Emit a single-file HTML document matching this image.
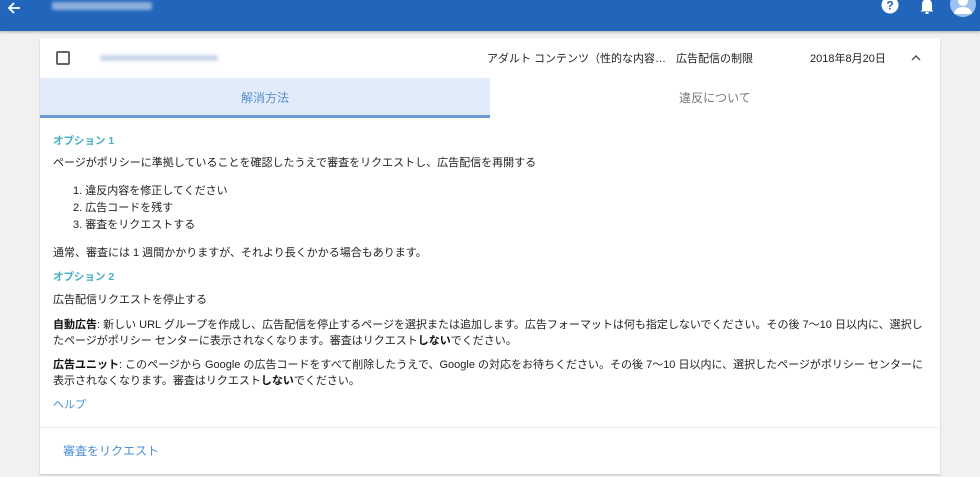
<!DOCTYPE html>
<html><head><meta charset="utf-8"><style>
*{margin:0;padding:0;box-sizing:border-box}
body{width:980px;height:477px;overflow:hidden;background:#f1f1f1;font-family:"Liberation Sans","Noto Sans CJK JP",sans-serif;color:#222;font-size:11px;position:relative}
.hdr{position:absolute;left:0;top:0;width:980px;height:31px;background:#2266bb;box-shadow:0 1px 3px rgba(0,0,0,.3)}
.card{position:absolute;left:40px;top:38px;width:900px;height:436px;background:#fff;box-shadow:0 1px 2px rgba(0,0,0,.2)}
.abs{position:absolute;white-space:nowrap}
.blur{position:absolute;background:#c9d6ea;filter:blur(1.5px);border-radius:2px}
.p{position:absolute;left:13px;white-space:nowrap;line-height:16px}
.link{color:#4a8fd8}
.opt{color:#45b0c0;font-weight:bold;font-size:10.5px}
b{font-weight:bold;color:#111}
</style></head><body>
<div class="hdr">
 <svg class="abs" style="left:6px;top:1px" width="16" height="14" viewBox="0 0 16 14"><path d="M14 7H3M8 2L3 7l5 5" stroke="#fff" stroke-width="1.8" fill="none"/></svg>
 <div class="blur" style="left:52px;top:2px;width:100px;height:8px;background:#8fb0dd"></div>
 <svg class="abs" style="left:880px;top:0" width="20" height="16"><circle cx="10" cy="5" r="8.5" fill="#fff"/><text x="10" y="9.5" font-size="12" font-weight="bold" fill="#2266bb" text-anchor="middle" font-family="Liberation Sans">?</text></svg>
 <svg class="abs" style="left:919px;top:0" width="16" height="16"><path d="M3 10V4a5 5 0 0 1 10 0v6l1.5 1.5h-13z" fill="#fff"/><rect x="6.5" y="12" width="3" height="2" fill="#fff"/></svg>
 <svg class="abs" style="left:949px;top:0" width="28" height="20"><circle cx="14" cy="4" r="13" fill="#9cc0f0"/><circle cx="14" cy="1" r="5" fill="#fff"/><path d="M5 14a9 7 0 0 1 18 0z" fill="#fff"/></svg>
</div>
<div class="card">
 <div class="abs" style="left:16px;top:13px;width:14px;height:14px;border:2px solid #666;border-radius:2px"></div>
 <div class="blur" style="left:60px;top:17px;width:118px;height:6px"></div>
 <div class="abs" style="left:447px;top:12px;font-size:11px">アダルト コンテンツ（性的な内容…</div>
 <div class="abs" style="left:636px;top:12px;font-size:11px">広告配信の制限</div>
 <div class="abs" style="left:770px;top:12px;font-size:11px">2018年8月20日</div>
 <svg class="abs" style="left:871px;top:16px" width="10" height="8"><path d="M1 6l4-4 4 4" stroke="#555" stroke-width="1.5" fill="none"/></svg>
 <div class="abs" style="left:0;top:40px;width:450px;height:40px;background:#e1ebf9;border-bottom:3px solid #6b9ad6;text-align:center;line-height:40px;color:#5a8fd0;font-size:12px">解消方法</div>
 <div class="abs" style="left:450px;top:40px;width:450px;height:40px;text-align:center;line-height:40px;color:#777;font-size:12px">違反について</div>
 <div class="p opt" style="top:95px">オプション 1</div>
 <div class="p" style="top:117px">ページがポリシーに準拠していることを確認したうえで審査をリクエストし、広告配信を再開する</div>
 <div class="p" style="top:145px;left:33px">1. 違反内容を修正してください</div>
 <div class="p" style="top:162px;left:33px">2. 広告コードを残す</div>
 <div class="p" style="top:179px;left:33px">3. 審査をリクエストする</div>
 <div class="p" style="top:207px">通常、審査には 1 週間かかりますが、それより長くかかる場合もあります。</div>
 <div class="p opt" style="top:231px">オプション 2</div>
 <div class="p" style="top:254px">広告配信リクエストを停止する</div>
 <div class="p" style="top:279px"><b>自動広告</b>: 新しい URL グループを作成し、広告配信を停止するページを選択または追加します。広告フォーマットは何も指定しないでください。その後 7〜10 日以内に、選択し</div>
 <div class="p" style="top:295px">たページがポリシー センターに表示されなくなります。審査はリクエスト<b>しない</b>でください。</div>
 <div class="p" style="top:319px"><b>広告ユニット</b>: このページから Google の広告コードをすべて削除したうえで、Google の対応をお待ちください。その後 7〜10 日以内に、選択したページがポリシー センターに</div>
 <div class="p" style="top:335px">表示されなくなります。審査はリクエスト<b>しない</b>でください。</div>
 <div class="p link" style="top:359px">ヘルプ</div>
 <div class="abs" style="left:0;top:389px;width:900px;height:1px;background:#eee"></div>
 <div class="p link" style="top:405px;left:23px;font-size:12px">審査をリクエスト</div>
</div>
</body></html>
